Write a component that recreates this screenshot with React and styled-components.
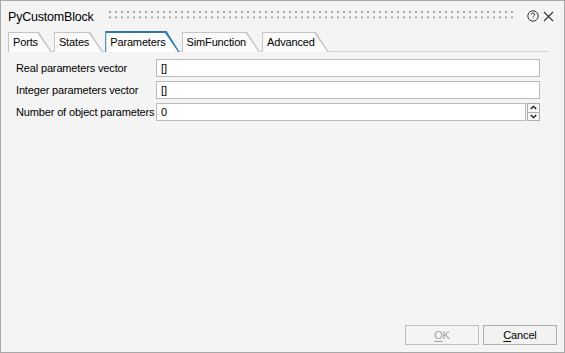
import React from "react";
import styled, { createGlobalStyle } from "styled-components";

const GlobalStyle = createGlobalStyle`
  html, body {
    margin: 0;
    padding: 0;
    background: #f4f4f4;
  }
  * {
    box-sizing: border-box;
  }
`;

const Window = styled.div`
  width: 565px;
  height: 353px;
  border: 1px solid #a8a8a8;
  background: #f4f4f4;
  display: flex;
  flex-direction: column;
  font-family: "Liberation Sans", Arial, sans-serif;
  font-size: 11px;
  letter-spacing: -0.15px;
  color: #000;
`;

const TitleBar = styled.div`
  height: 30px;
  display: flex;
  align-items: center;
  padding: 0 9px 0 7px;
`;

const Title = styled.div`
  font-size: 12.5px;
  letter-spacing: -0.2px;
  white-space: nowrap;
  padding-top: 1px;
  margin-right: 15px;
`;

const Grip = styled.div`
  flex: 1;
  height: 11px;
  margin-right: 10px;
  background-image: radial-gradient(circle at 1px 1px, #a0a0a0 0.9px, transparent 1px);
  background-size: 6px 5.5px;
`;

const IconButton = styled.div`
  width: 14px;
  height: 14px;
  display: flex;
  align-items: center;
  justify-content: center;
  margin-left: ${({ $gap }) => $gap || 0}px;
`;

const TabStrip = styled.div`
  display: flex;
  align-items: flex-end;
  gap: 2px;
  height: 21px;
  margin: 0 15px 0 7px;
  border-bottom: 1px solid #d4d4d4;
`;

const TabOuter = styled.div`
  height: ${({ $active }) => ($active ? "21px" : "20px")};
  margin-bottom: -1px;
  background: ${({ $active }) => ($active ? "#2a78b4" : "#c4c4c4")};
  clip-path: polygon(0 0, calc(100% - 13px) 0, 100% 100%, 0 100%);
  padding: ${({ $active }) => ($active ? "2px 0 0 1px" : "1px 0 0 1px")};
`;

const TabInner = styled.div`
  height: 100%;
  background: ${({ $active }) => ($active ? "#ffffff" : "#fbfbfb")};
  clip-path: polygon(0 0, calc(100% - 14.5px) 0, calc(100% - 1.4px) 100%, 0 100%);
  padding: 2px 14px 0 4px;
  white-space: nowrap;
  line-height: 15px;
`;

const Form = styled.div`
  display: flex;
  flex-direction: column;
  gap: 4px;
  padding: 7px 24px 0 15px;
`;

const Row = styled.div`
  display: flex;
  align-items: center;
  height: 18px;
`;

const Label = styled.div`
  width: 140px;
  white-space: nowrap;
`;

const Field = styled.div`
  flex: 1;
  height: 18px;
  border: 1px solid #bcbcbc;
  background: #fff;
  padding: 0 4px;
  line-height: 16px;
  display: flex;
  align-items: center;
`;

const SpinBox = styled.div`
  flex: 1;
  display: flex;
  height: 18px;
`;

const Spinners = styled.div`
  width: 13px;
  display: flex;
  flex-direction: column;
  margin-left: 1px;
`;

const SpinButton = styled.div`
  flex: 1;
  border: 1px solid #adadad;
  border-top-width: ${({ $down }) => ($down ? "0" : "1px")};
  background: #f7f7f7;
  display: flex;
  align-items: center;
  justify-content: center;
`;

const Spacer = styled.div`
  flex: 1;
`;

const Footer = styled.div`
  display: flex;
  justify-content: flex-end;
  gap: 4px;
  padding: 0 7px 7px 0;
`;

const Button = styled.div`
  width: 74px;
  height: 20px;
  border: 1px solid ${({ $disabled }) => ($disabled ? "#bfbfbf" : "#adadad")};
  background: ${({ $disabled }) => ($disabled ? "#f4f4f4" : "#f2f2f2")};
  color: ${({ $disabled }) => ($disabled ? "#a0a0a0" : "#000")};
  display: flex;
  align-items: center;
  justify-content: center;

  u {
    text-underline-offset: 2px;
  }
`;

const tabs = ["Ports", "States", "Parameters", "SimFunction", "Advanced"];

const HelpIcon = () => (
  <svg width="12" height="12" viewBox="0 0 12 12" fill="none" stroke="#333" strokeWidth="1">
    <circle cx="6" cy="6" r="5.2" />
    <path d="M4.4 4.6a1.6 1.6 0 1 1 2.3 1.4c-.5.3-.7.6-.7 1.2" />
    <circle cx="6" cy="8.8" r="0.45" fill="#333" stroke="none" />
  </svg>
);

const CloseIcon = () => (
  <svg width="11" height="11" viewBox="0 0 11 11" stroke="#333" strokeWidth="1.1">
    <path d="M1 1l9 9M10 1l-9 9" />
  </svg>
);

const Chevron = ({ down }) => (
  <svg width="7" height="5" viewBox="0 0 7 5" fill="none" stroke="#111" strokeWidth="1.3">
    {down ? <path d="M0.8 1l2.7 2.7L6.2 1" /> : <path d="M0.8 4l2.7-2.7L6.2 4" />}
  </svg>
);

export default function App() {
  return (
    <>
      <GlobalStyle />
      <Window>
        <TitleBar>
          <Title>PyCustomBlock</Title>
          <Grip />
          <IconButton>
            <HelpIcon />
          </IconButton>
          <IconButton $gap={1}>
            <CloseIcon />
          </IconButton>
        </TitleBar>
        <TabStrip>
          {tabs.map((t) => (
            <TabOuter key={t} $active={t === "Parameters"}>
              <TabInner $active={t === "Parameters"}>{t}</TabInner>
            </TabOuter>
          ))}
        </TabStrip>
        <Form>
          <Row>
            <Label>Real parameters vector</Label>
            <Field>[]</Field>
          </Row>
          <Row>
            <Label>Integer parameters vector</Label>
            <Field>[]</Field>
          </Row>
          <Row>
            <Label>Number of object parameters</Label>
            <SpinBox>
              <Field>0</Field>
              <Spinners>
                <SpinButton>
                  <Chevron />
                </SpinButton>
                <SpinButton $down>
                  <Chevron down />
                </SpinButton>
              </Spinners>
            </SpinBox>
          </Row>
        </Form>
        <Spacer />
        <Footer>
          <Button $disabled>
            <span><u>O</u>K</span>
          </Button>
          <Button>
            <span><u>C</u>ancel</span>
          </Button>
        </Footer>
      </Window>
    </>
  );
}
